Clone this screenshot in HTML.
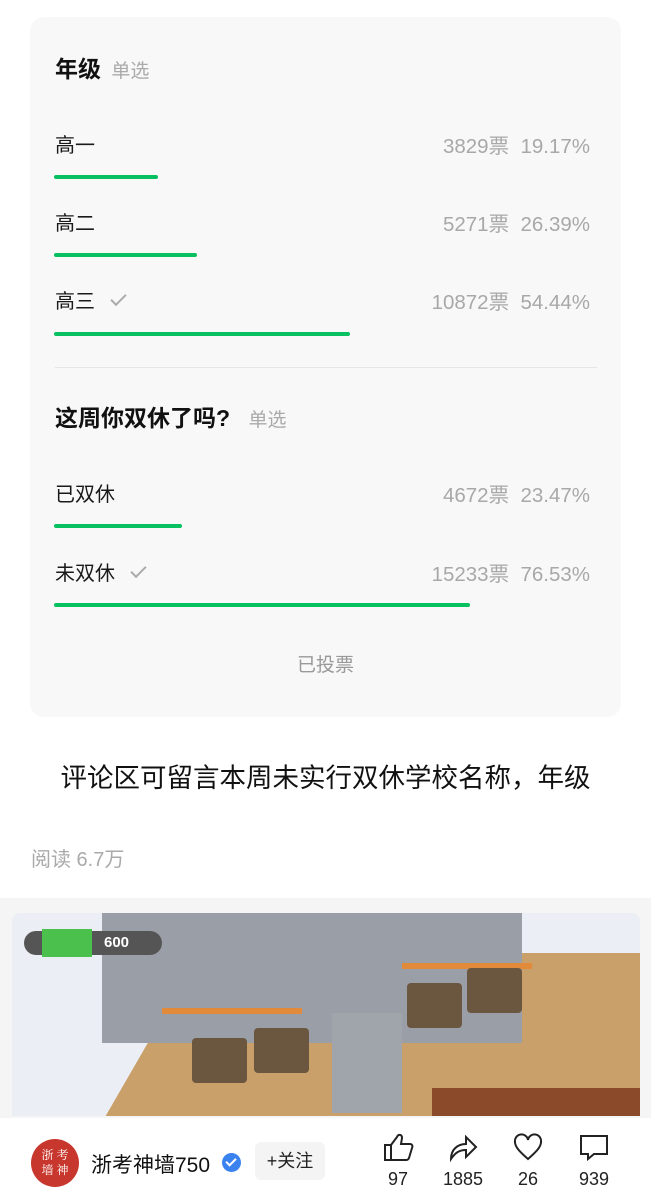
<!DOCTYPE html>
<html><head><meta charset="utf-8"><style>
*{margin:0;padding:0;box-sizing:border-box}
body{width:651px;height:1200px;background:#fff;position:relative;overflow:hidden;font-family:"Liberation Sans","Noto Sans CJK SC",sans-serif;color:#111}
.a{position:absolute;white-space:nowrap}
.card{position:absolute;left:30px;top:17px;width:591px;height:700px;background:#f8f8f8;border-radius:14px}
.t{font-size:23px;font-weight:bold;color:#111}
.s{font-size:19px;color:#aaa}
.l{font-size:20px;color:#1a1a1a}
.r{font-size:20.5px;color:#a8a8a8;right:61px}
.bar{position:absolute;left:54px;height:4px;border-radius:2px;background:#07c160}
.ck{display:inline-block;width:15px;height:8px;border-left:2px solid #aaa;border-bottom:2px solid #aaa;transform:rotate(-45deg);margin-left:16px;vertical-align:6px}
.ic{position:absolute;top:1132px}
.n{position:absolute;top:1169px;font-size:18px;color:#222;width:60px;text-align:center}
</style></head><body>
<div class="card"></div>
<div class="a t" style="left:55px;top:50px">年级 <span class="s" style="font-weight:normal;margin-left:4px">单选</span></div>
<div class="a l" style="left:55px;top:129px">高一</div><div class="a r" style="top:129px">3829票&nbsp;&nbsp;19.17%</div>
<div class="bar" style="top:175px;width:104px"></div>
<div class="a l" style="left:55px;top:207px">高二</div><div class="a r" style="top:207px">5271票&nbsp;&nbsp;26.39%</div>
<div class="bar" style="top:253px;width:143px"></div>
<div class="a l" style="left:55px;top:285px">高三<span class="ck"></span></div><div class="a r" style="top:285px">10872票&nbsp;&nbsp;54.44%</div>
<div class="bar" style="top:332px;width:296px"></div>
<div class="a" style="left:55px;top:367px;width:542px;height:1px;background:#e6e6e6"></div>
<div class="a t" style="left:55px;top:399px">这周你双休了吗? <span class="s" style="font-weight:normal;margin-left:12px">单选</span></div>
<div class="a l" style="left:55px;top:478px">已双休</div><div class="a r" style="top:478px">4672票&nbsp;&nbsp;23.47%</div>
<div class="bar" style="top:524px;width:128px"></div>
<div class="a l" style="left:55px;top:557px">未双休<span class="ck"></span></div><div class="a r" style="top:557px">15233票&nbsp;&nbsp;76.53%</div>
<div class="bar" style="top:603px;width:416px"></div>
<div class="a" style="left:0;width:651px;text-align:center;top:650px;font-size:19px;color:#999">已投票</div>
<div class="a" style="left:0;width:651px;text-align:center;top:756px;font-size:26.5px;color:#111">评论区可留言本周未实行双休学校名称，年级</div>
<div class="a" style="left:31px;top:843px;font-size:20px;color:#aaa">阅读 6.7万</div>
<div class="a" style="left:0;top:898px;width:651px;height:220px;background:#f5f5f5"></div>
<div class="a" style="left:12px;top:913px;width:628px;height:203px;border-radius:8px 8px 0 0;overflow:hidden;background:#eceef5">
 <div class="a" style="left:130px;top:40px;width:520px;height:200px;background:#c9a069;transform:skewX(-30deg)"></div>
 <div class="a" style="left:90px;top:0;width:420px;height:130px;background:#9a9ea6"></div>
 <div class="a" style="left:320px;top:100px;width:70px;height:100px;background:#a0a4ab"></div>
 <div class="a" style="left:150px;top:95px;width:140px;height:6px;background:#e08a3a"></div>
 <div class="a" style="left:390px;top:50px;width:130px;height:6px;background:#e08a3a"></div>
 <div class="a" style="left:180px;top:125px;width:55px;height:45px;background:#6b5640;border-radius:4px"></div>
 <div class="a" style="left:242px;top:115px;width:55px;height:45px;background:#6b5640;border-radius:4px"></div>
 <div class="a" style="left:395px;top:70px;width:55px;height:45px;background:#6b5640;border-radius:4px"></div>
 <div class="a" style="left:455px;top:55px;width:55px;height:45px;background:#6b5640;border-radius:4px"></div>
 <div class="a" style="left:420px;top:175px;width:210px;height:40px;background:#8b4a2a"></div>
 <div class="a" style="left:12px;top:18px;width:138px;height:24px;border-radius:12px;background:#555;color:#fff;font-weight:bold;font-size:15px;padding-left:80px;line-height:24px">600</div>
 <div class="a" style="left:30px;top:16px;width:50px;height:28px;background:#4cc04c"></div>
</div>
<div class="a" style="left:31px;top:1139px;width:48px;height:48px;border-radius:50%;background:#c8372d;color:#fff;font-family:'Noto Serif CJK SC',serif;font-size:12px;line-height:15px;text-align:center;padding-top:8px">浙 考<br>墙 神</div>
<div class="a" style="left:91px;top:1149px;font-size:21px;color:#111">浙考神墙750</div>
<div class="a" style="left:222px;top:1153px;width:19px;height:19px;border-radius:50%;background:#3a82f0"></div>
<div class="a" style="left:228px;top:1156px;width:6px;height:10px;border-right:2px solid #fff;border-bottom:2px solid #fff;transform:rotate(45deg)"></div>
<div class="a" style="left:255px;top:1142px;width:70px;height:38px;border-radius:6px;background:#f4f4f4;text-align:center;line-height:38px;font-size:18px;color:#222">+关注</div>
<svg class="ic" style="left:383px" width="32" height="30" viewBox="0 0 32 30" fill="none" stroke="#222" stroke-width="2"><path d="M2 13h6v15H2zM8 13l6-8c1-3 5-3 5 1l-1 6h9c2 0 3 2 2 4l-3 10c-1 2-2 2-3 2H8"/></svg>
<svg class="ic" style="left:447px" width="32" height="30" viewBox="0 0 32 30" fill="none" stroke="#222" stroke-width="2"><path d="M4 27c0-9 6-15 15-15V5l10 10-10 10v-7c-7 0-11 3-15 9z"/></svg>
<svg class="ic" style="left:512px" width="32" height="30" viewBox="0 0 32 30" fill="none" stroke="#222" stroke-width="2"><path d="M16 27C8 20 3 15 3 10a6.5 6.5 0 0 1 13-2 6.5 6.5 0 0 1 13 2c0 5-5 10-13 17z"/></svg>
<svg class="ic" style="left:578px" width="32" height="30" viewBox="0 0 32 30" fill="none" stroke="#222" stroke-width="2"><path d="M3 4h26v18H16l-6 5v-5H3z"/></svg>
<div class="n" style="left:368px">97</div>
<div class="n" style="left:433px">1885</div>
<div class="n" style="left:498px">26</div>
<div class="n" style="left:564px">939</div>
</body></html>
